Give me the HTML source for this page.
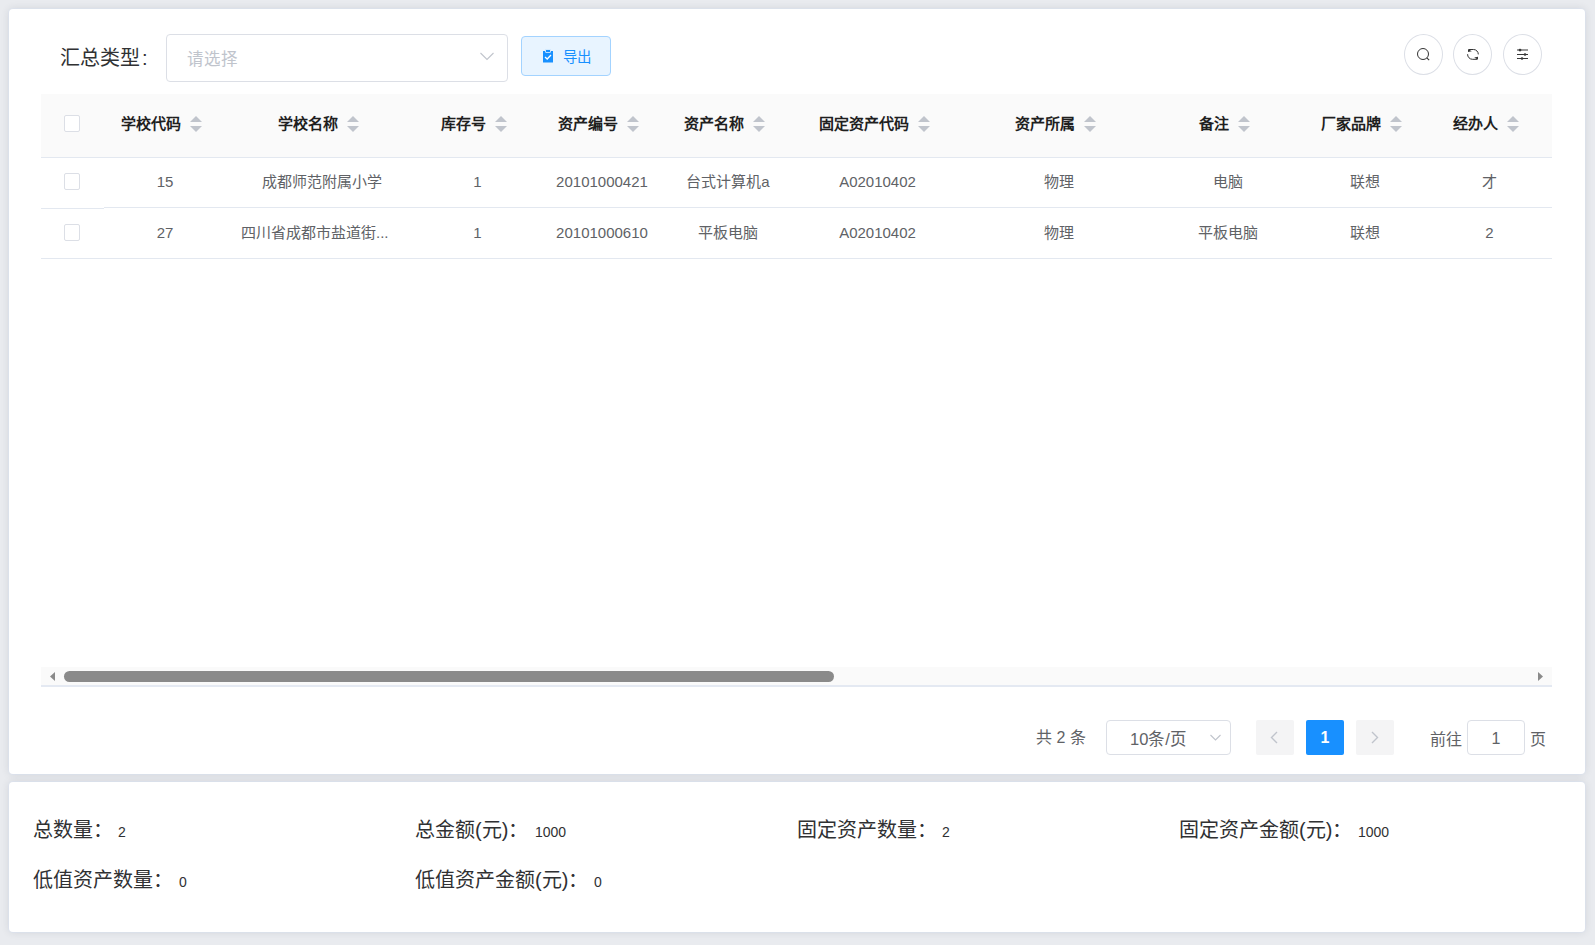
<!DOCTYPE html>
<html lang="zh-CN">
<head>
<meta charset="utf-8">
<style>
*{box-sizing:border-box;margin:0;padding:0}
html,body{width:1595px;height:945px;overflow:hidden}
body{position:relative;background:#e9ebef;font-family:"Liberation Sans",sans-serif;color:#606266}
.a{position:absolute;white-space:nowrap}
.card{position:absolute;background:#fff;border-radius:4px;box-shadow:0 0 0 1px rgba(215,225,245,.35),0 0 8px rgba(30,40,60,.12)}
.lbl{font-size:20px;color:#303133;line-height:24px}
.sel{border:1px solid #dcdfe6;border-radius:4px;background:#fff}
.chev{position:absolute}
.btnexp{background:#e8f4ff;border:1px solid #a3d3ff;border-radius:4px}
.circ{width:39px;height:41px;border:1px solid #dcdfe6;border-radius:50%;background:#fff}
.thead{left:41px;top:94px;width:1511px;height:64px;background:#fafafa;border-bottom:1px solid #e3e8f0}
.rowline{left:41px;width:1511px;height:1px;background:#e3e8f0}
.cb{width:16px;height:17px;border:1px solid #dcdfe6;border-radius:2px;background:#fff}
.th{font-size:15px;font-weight:bold;color:#1f1f1f;line-height:18px;top:115px;display:flex;align-items:center}
.sort{display:inline-block;width:12px;height:16px;position:relative;margin-left:9px}
.sort:before{content:"";position:absolute;left:0;top:0;border-left:6px solid transparent;border-right:6px solid transparent;border-bottom:6px solid #c0c4cc}
.sort:after{content:"";position:absolute;left:0;bottom:0;border-left:6px solid transparent;border-right:6px solid transparent;border-top:6px solid #c0c4cc}
.td{font-size:15px;line-height:18px;color:#606266;text-align:center}
.sum{font-size:20px;color:#303133;line-height:24px}
.val{font-size:14px;color:#303133;line-height:16px}
.pg{font-size:16px;color:#606266;line-height:20px}
</style>
</head>
<body>
<div class="card" style="left:9px;top:9px;width:1576px;height:765px"></div>
<div class="card" style="left:9px;top:782px;width:1576px;height:150px"></div>

<!-- toolbar -->
<div class="a lbl" style="left:60px;top:46px">汇总类型<span style="margin-left:2px">:</span></div>
<div class="a sel" style="left:166px;top:34px;width:342px;height:48px"></div>
<div class="a" style="left:187px;top:49px;font-size:16.5px;line-height:20px;color:#c0c4cc">请选择</div>
<svg class="a" style="left:479px;top:51px" width="16" height="11" viewBox="0 0 16 11"><path d="M1.5 2 L8 8.5 L14.5 2" fill="none" stroke="#c0c4cc" stroke-width="1.1"/></svg>

<div class="a btnexp" style="left:521px;top:36px;width:90px;height:40px"></div>
<svg class="a" style="left:542px;top:49px" width="12" height="14" viewBox="0 0 12 14"><rect x="1" y="2" width="10" height="11.5" fill="#1890ff"/><rect x="3.5" y="0.5" width="5" height="3" rx="0.5" fill="#1890ff" stroke="#e8f4ff" stroke-width="0.8"/><path d="M3 8 L5.2 10 L9 6" fill="none" stroke="#fff" stroke-width="1.3"/></svg>
<div class="a" style="left:563px;top:48px;font-size:14.5px;line-height:18px;color:#1890ff">导出</div>

<div class="a circ" style="left:1404px;top:34px"></div>
<div class="a circ" style="left:1453px;top:34px"></div>
<div class="a circ" style="left:1503px;top:34px"></div>

<!-- table -->
<div class="a thead"></div>
<div class="a rowline" style="top:207px;left:104px;width:1448px"></div>
<div class="a rowline" style="top:208px;width:63px"></div>
<div class="a rowline" style="top:258px"></div>

<div class="a cb" style="left:64px;top:115px"></div>
<div class="a cb" style="left:64px;top:173px"></div>
<div class="a cb" style="left:64px;top:224px"></div>
<div class="a th" style="left:104px;width:122px;justify-content:center"><span>学校代码</span><i class="sort"></i><i style="display:inline-block;width:7px"></i></div>
<div class="a th" style="left:226px;width:191px;justify-content:center"><span>学校名称</span><i class="sort"></i><i style="display:inline-block;width:7px"></i></div>
<div class="a th" style="left:417px;width:121px;justify-content:center"><span>库存号</span><i class="sort"></i><i style="display:inline-block;width:7px"></i></div>
<div class="a th" style="left:538px;width:128px;justify-content:center"><span>资产编号</span><i class="sort"></i><i style="display:inline-block;width:7px"></i></div>
<div class="a th" style="left:666px;width:124px;justify-content:center"><span>资产名称</span><i class="sort"></i><i style="display:inline-block;width:7px"></i></div>
<div class="a th" style="left:790px;width:175px;justify-content:center"><span>固定资产代码</span><i class="sort"></i><i style="display:inline-block;width:7px"></i></div>
<div class="a th" style="left:965px;width:188px;justify-content:center"><span>资产所属</span><i class="sort"></i><i style="display:inline-block;width:7px"></i></div>
<div class="a th" style="left:1153px;width:150px;justify-content:center"><span>备注</span><i class="sort"></i><i style="display:inline-block;width:7px"></i></div>
<div class="a th" style="left:1303px;width:124px;justify-content:center"><span>厂家品牌</span><i class="sort"></i><i style="display:inline-block;width:7px"></i></div>
<div class="a th" style="left:1427px;width:125px;justify-content:center"><span>经办人</span><i class="sort"></i><i style="display:inline-block;width:7px"></i></div>
<div class="a td" style="left:104px;width:122px;top:173px">15</div>
<div class="a td" style="left:104px;width:122px;top:224px">27</div>
<div class="a td" style="left:226px;width:191px;top:173px">成都师范附属小学</div>
<div class="a td" style="left:417px;width:121px;top:173px">1</div>
<div class="a td" style="left:417px;width:121px;top:224px">1</div>
<div class="a td" style="left:538px;width:128px;top:173px">20101000421</div>
<div class="a td" style="left:538px;width:128px;top:224px">20101000610</div>
<div class="a td" style="left:666px;width:124px;top:173px">台式计算机a</div>
<div class="a td" style="left:666px;width:124px;top:224px">平板电脑</div>
<div class="a td" style="left:790px;width:175px;top:173px">A02010402</div>
<div class="a td" style="left:790px;width:175px;top:224px">A02010402</div>
<div class="a td" style="left:965px;width:188px;top:173px">物理</div>
<div class="a td" style="left:965px;width:188px;top:224px">物理</div>
<div class="a td" style="left:1153px;width:150px;top:173px">电脑</div>
<div class="a td" style="left:1153px;width:150px;top:224px">平板电脑</div>
<div class="a td" style="left:1303px;width:124px;top:173px">联想</div>
<div class="a td" style="left:1303px;width:124px;top:224px">联想</div>
<div class="a td" style="left:1427px;width:125px;top:173px">才</div>
<div class="a td" style="left:1427px;width:125px;top:224px">2</div>
<div class="a td" style="left:241px;top:224px;text-align:left">四川省成都市盐道街...</div>

<!-- circle icons -->
<svg class="a" style="left:1415px;top:46px" width="16" height="16" viewBox="0 0 16 16"><circle cx="8" cy="8" r="5.5" fill="none" stroke="#333" stroke-width="1"/><path d="M11.8 11.8 L14.2 14.2" stroke="#333" stroke-width="1.1"/></svg>
<svg class="a" style="left:1465px;top:46px" width="16" height="16" viewBox="0 0 16 16"><path d="M4 3.5 H8.6 A4.8 4.8 0 0 1 13.3 8.4" fill="none" stroke="#333" stroke-width="1"/><path d="M2.6 8.2 A4.9 4.9 0 0 0 7.4 13.3 H12" fill="none" stroke="#333" stroke-width="1"/><path d="M3 2.9 L3 6 L6.8 5.3Z" fill="#333"/><path d="M13 13.8 L13 10.7 L9.2 11.4Z" fill="#333"/></svg>
<svg class="a" style="left:1514px;top:46px" width="16" height="16" viewBox="0 0 16 16"><path d="M3 4 H14 M3 8.5 H14 M3 12.5 H14" stroke="#383838" stroke-width="1.1"/><circle cx="6" cy="4.1" r="1.4" fill="#383838"/><circle cx="11" cy="8.5" r="1.3" fill="#383838"/><circle cx="8" cy="12.5" r="1.3" fill="#383838"/></svg>

<!-- scrollbar -->
<div class="a" style="left:41px;top:667px;width:1511px;height:18px;background:#fafafa"></div>
<div class="a" style="left:41px;top:685px;width:1511px;height:2px;background:#e4e9f2"></div>
<svg class="a" style="left:49px;top:671px" width="7" height="11" viewBox="0 0 7 11"><path d="M6 1 L1 5.5 L6 10Z" fill="#8a8a8a"/></svg>
<div class="a" style="left:64px;top:671px;width:770px;height:11px;border-radius:6px;background:#8a8a8a"></div>
<svg class="a" style="left:1537px;top:671px" width="7" height="11" viewBox="0 0 7 11"><path d="M1 1 L6 5.5 L1 10Z" fill="#8a8a8a"/></svg>

<!-- pagination -->
<div class="a pg" style="left:1036px;top:728px">共 2 条</div>
<div class="a sel" style="left:1106px;top:720px;width:125px;height:35px"></div>
<div class="a pg" style="left:1130px;top:729px;font-size:16.5px">10条/页</div>
<svg class="a" style="left:1209px;top:733px" width="13" height="9" viewBox="0 0 13 9"><path d="M1.5 2 L6.5 7 L11.5 2" fill="none" stroke="#c0c4cc" stroke-width="1.1"/></svg>
<div class="a" style="left:1256px;top:720px;width:38px;height:35px;background:#f4f4f5;border-radius:2px"></div>
<svg class="a" style="left:1268px;top:730px" width="12" height="15" viewBox="0 0 12 15"><path d="M9 2 L3.5 7.5 L9 13" fill="none" stroke="#c0c4cc" stroke-width="1.4"/></svg>
<div class="a" style="left:1306px;top:720px;width:38px;height:35px;background:#1890ff;border-radius:2px;color:#fff;font-weight:bold;font-size:16px;line-height:35px;text-align:center">1</div>
<div class="a" style="left:1356px;top:720px;width:38px;height:35px;background:#f4f4f5;border-radius:2px"></div>
<svg class="a" style="left:1369px;top:730px" width="12" height="15" viewBox="0 0 12 15"><path d="M3 2 L8.5 7.5 L3 13" fill="none" stroke="#c0c4cc" stroke-width="1.4"/></svg>
<div class="a pg" style="left:1430px;top:730px">前往</div>
<div class="a sel" style="left:1467px;top:720px;width:58px;height:35px;font-size:16px;line-height:35px;text-align:center;color:#606266">1</div>
<div class="a pg" style="left:1530px;top:730px">页</div>

<!-- summary -->
<div class="a sum" style="left:33px;top:818px">总数量：</div>
<div class="a val" style="left:118px;top:824px">2</div>
<div class="a sum" style="left:415px;top:818px">总金额(元)：</div>
<div class="a val" style="left:535px;top:824px">1000</div>
<div class="a sum" style="left:797px;top:818px">固定资产数量：</div>
<div class="a val" style="left:942px;top:824px">2</div>
<div class="a sum" style="left:1179px;top:818px">固定资产金额(元)：</div>
<div class="a val" style="left:1358px;top:824px">1000</div>
<div class="a sum" style="left:33px;top:868px">低值资产数量：</div>
<div class="a val" style="left:179px;top:874px">0</div>
<div class="a sum" style="left:415px;top:868px">低值资产金额(元)：</div>
<div class="a val" style="left:594px;top:874px">0</div>

</body>
</html>
